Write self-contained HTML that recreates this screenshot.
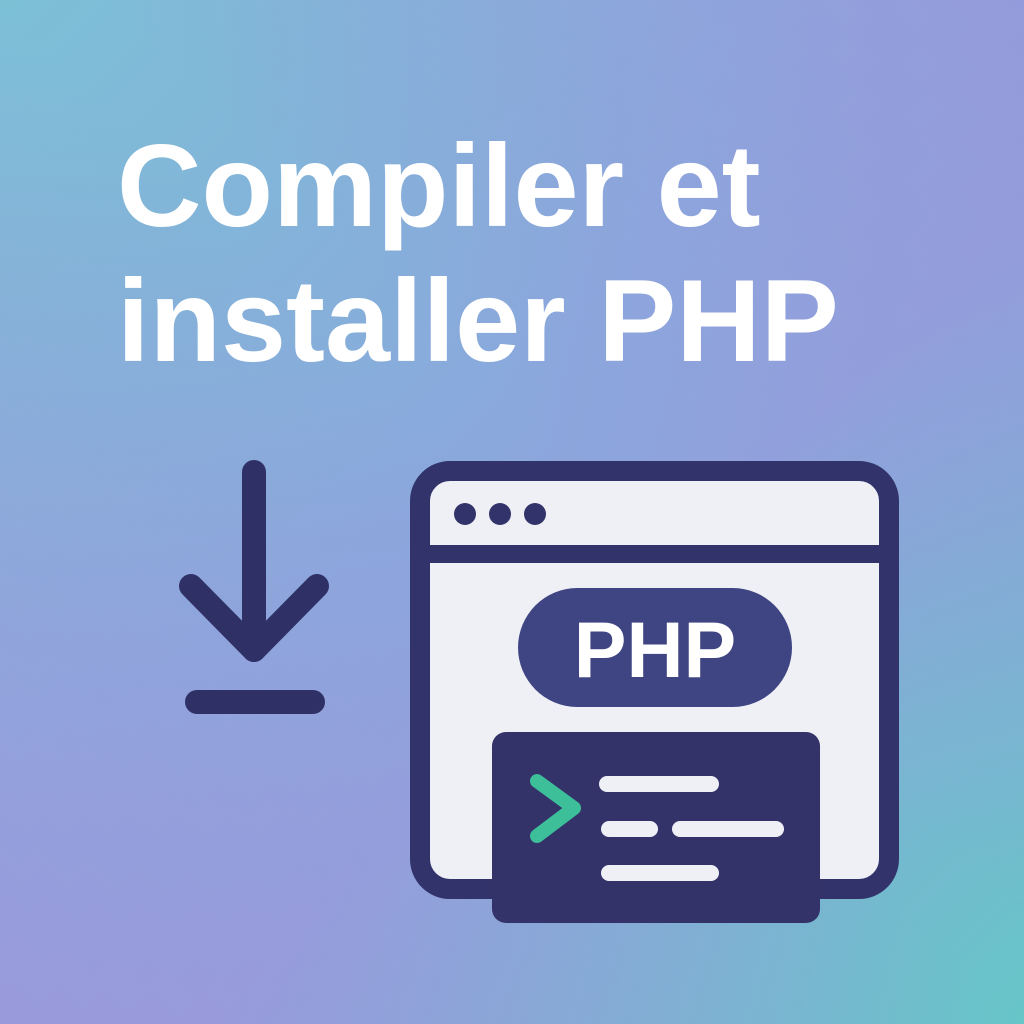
<!DOCTYPE html>
<html><head><style>
html,body{margin:0;padding:0}
body{width:1024px;height:1024px;overflow:hidden;position:relative;
background:linear-gradient(135deg,#7cc0d6 0%,#8aa8dc 45%,#8fa2dc 60%,#66c6c8 100%);}
.ov{position:absolute;inset:0;background:linear-gradient(45deg,#a292dc 0%,rgba(160,146,220,0) 50%,rgba(155,150,220,0) 55%,#9b94dc 100%);opacity:.6}
h1{position:absolute;left:117px;top:118px;margin:0;font-family:"Liberation Sans",sans-serif;font-weight:bold;font-size:117px;line-height:135px;color:#fff;letter-spacing:0}
svg{position:absolute;left:0;top:0}
</style></head><body>
<div class="ov"></div>
<h1>Compiler et<br>installer PHP</h1>
<svg width="1024" height="1024">
<g stroke="#2f3166" stroke-width="24" stroke-linecap="round" stroke-linejoin="round" fill="none">
<path d="M254 472V650"/><path d="M191 586L254 650L317 586"/><path d="M197 702H313"/>
</g>
<rect x="420" y="471" width="469" height="418" rx="30" fill="#eff0f5" stroke="#31336a" stroke-width="20"/>
<rect x="430" y="545" width="450" height="18" fill="#31336a"/>
<circle cx="465" cy="514" r="11" fill="#31336a"/>
<circle cx="500" cy="514" r="11" fill="#31336a"/>
<circle cx="535" cy="514" r="11" fill="#31336a"/>
<rect x="518" y="588" width="274" height="119" rx="59.5" fill="#3f4483"/>
<text x="655" y="677" text-anchor="middle" font-family="Liberation Sans,sans-serif" font-weight="bold" font-size="79" fill="#fff">PHP</text>
<rect x="492" y="732" width="328" height="191" rx="14" fill="#33336a"/>
<path d="M537 781L574 808L537 836" stroke="#3dbf99" stroke-width="14" stroke-linecap="round" stroke-linejoin="round" fill="none"/>
<g stroke="#eff0f5" stroke-width="16" stroke-linecap="round">
<path d="M607 784H711"/><path d="M609 829H650"/><path d="M680 829H776"/><path d="M609 873H711"/>
</g>
</svg>
</body></html>
